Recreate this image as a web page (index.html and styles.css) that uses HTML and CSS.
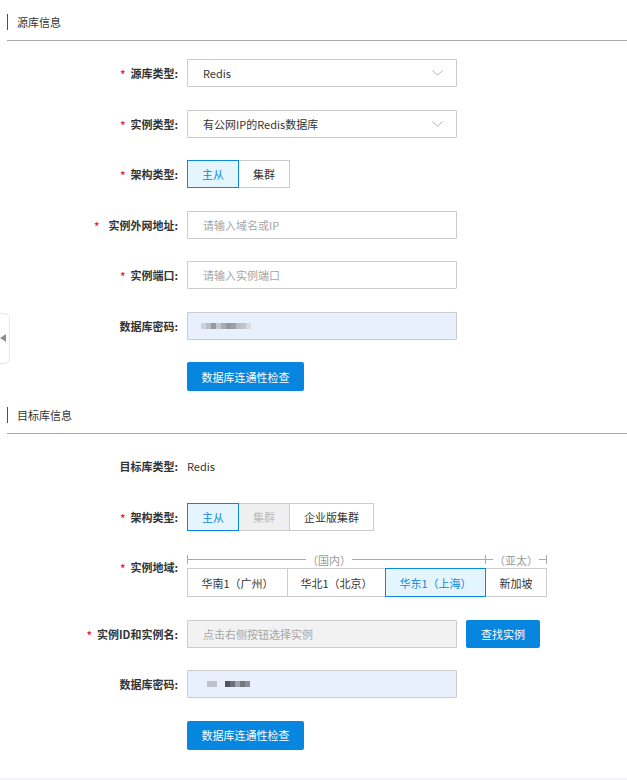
FILE: index.html
```html
<!DOCTYPE html>
<html lang="zh-CN">
<head>
<meta charset="utf-8">
<title>数据迁移</title>
<link rel="stylesheet" href="styles.css">
</head>
<body>
<div class="page">
  <div class="side-tab"><span class="tri"></span></div>

  <div class="sec-head"><div class="sec-title">源库信息</div></div>

  <div class="row first">
    <div class="label"><span class="req">*</span>源库类型:</div>
    <div class="select"><span>Redis</span><svg class="chev" width="11" height="6" viewBox="0 0 11 6"><path d="M0.5 0.5 L5.5 5.2 L10.5 0.5" fill="none" stroke="#b3b3b3" stroke-width="1"/></svg></div>
  </div>
  <div class="row">
    <div class="label"><span class="req">*</span>实例类型:</div>
    <div class="select"><span>有公网IP的Redis数据库</span><svg class="chev" width="11" height="6" viewBox="0 0 11 6"><path d="M0.5 0.5 L5.5 5.2 L10.5 0.5" fill="none" stroke="#b3b3b3" stroke-width="1"/></svg></div>
  </div>
  <div class="row">
    <div class="label"><span class="req">*</span>架构类型:</div>
    <div class="btn-group">
      <div class="seg-btn w52 active">主从</div>
      <div class="seg-btn w52">集群</div>
    </div>
  </div>
  <div class="row">
    <div class="label"><span class="req wide">*</span>实例外网地址:</div>
    <div class="input placeholder">请输入域名或IP</div>
  </div>
  <div class="row">
    <div class="label"><span class="req">*</span>实例端口:</div>
    <div class="input placeholder">请输入实例端口</div>
  </div>
  <div class="row">
    <div class="label">数据库密码:</div>
    <div class="input autofill">
      <span class="blur b1"><i class="c1"></i><i class="c2"></i><i class="c3"></i><i class="c4"></i><i class="c5"></i><i class="c3"></i><i class="c6"></i><i class="c2"></i><i class="c7"></i><i class="c8"></i></span>
    </div>
  </div>
  <div class="row">
    <div class="label"></div>
    <div class="btn-primary">数据库连通性检查</div>
  </div>

  <div class="sec-head second"><div class="sec-title">目标库信息</div></div>

  <div class="row first">
    <div class="label">目标库类型:</div>
    <div class="value">Redis</div>
  </div>
  <div class="row">
    <div class="label"><span class="req">*</span>架构类型:</div>
    <div class="btn-group">
      <div class="seg-btn w52 active">主从</div>
      <div class="seg-btn w52 disabled">集群</div>
      <div class="seg-btn w85">企业版集群</div>
    </div>
  </div>
  <div class="row">
    <div class="label"><span class="req">*</span>实例地域:</div>
    <div class="region">
      <div class="bracket">
        <div class="brk dom"><span class="ln l1"></span><span class="brk-text">（国内）</span><span class="ln grow"></span></div>
        <div class="brk apac"><span class="ln grow"></span><span class="brk-text">（亚太）</span><span class="ln grow"></span></div>
      </div>
      <div class="btn-group">
        <div class="seg-btn rg r1">华南1（广州）</div>
        <div class="seg-btn rg r2">华北1（北京）</div>
        <div class="seg-btn rg r3 active">华东1（上海）</div>
        <div class="seg-btn rg r4">新加坡</div>
      </div>
    </div>
  </div>
  <div class="row">
    <div class="label"><span class="req">*</span>实例ID和实例名:</div>
    <div class="input disabled-input placeholder">点击右侧按钮选择实例</div>
    <div class="btn-primary find">查找实例</div>
  </div>
  <div class="row">
    <div class="label">数据库密码:</div>
    <div class="input autofill">
      <span class="blur b2"><i class="c9"></i><i class="c9"></i><i class="gap"></i><i class="d1"></i><i class="d2"></i><i class="d3"></i><i class="d4"></i><i class="d5"></i></span>
    </div>
  </div>
  <div class="row">
    <div class="label"></div>
    <div class="btn-primary">数据库连通性检查</div>
  </div>

  <div class="footer-band"></div>
</div>
</body>
</html>
```
FILE: styles.css
```css
* { box-sizing: border-box; }
html, body { margin: 0; padding: 0; background: #fff; }
body {
  font-family: "Noto Sans CJK SC", "Noto Sans", sans-serif;
  font-size: 11px;
  color: #333;
}
.page { position: relative; width: 627px; height: 780px; overflow: hidden; }

.side-tab {
  position: absolute;
  left: 0;
  top: 313px;
  width: 10px;
  height: 51px;
  border: 1px solid #e6e6e6;
  border-left: none;
  border-radius: 0 6px 6px 0;
  background: #fff;
}
.side-tab .tri {
  position: absolute;
  left: 0;
  top: 20px;
  width: 0;
  height: 0;
  border-top: 4px solid transparent;
  border-bottom: 4px solid transparent;
  border-right: 6px solid #8a8f96;
}

.sec-head {
  margin-left: 7px;
  padding: 14px 0 10px;
  border-bottom: 1px solid #aaa;
}
.sec-head.second { margin-top: 2px; }
.sec-title {
  border-left: 1px solid #d9141e;
  padding-left: 9px;
  line-height: 16px;
  height: 16px;
  color: #333;
}

.row { display: flex; align-items: flex-start; margin-top: 22.5px; }
.row.first { margin-top: 18px; }
.label {
  flex: none;
  width: 187px;
  height: 28px;
  padding-right: 9px;
  text-align: right;
  line-height: 28px;
  font-weight: bold;
  color: #333;
  white-space: nowrap;
  overflow: hidden;
}
.req { color: #e8262d; font-weight: bold; margin-right: 5px; font-size: 10px; line-height: 0; }
.req.wide { margin-right: 9px; }

.select, .input {
  width: 270px;
  height: 28px;
  border: 1px solid #ccc;
  border-radius: 1px;
  display: flex;
  align-items: center;
  padding-left: 15px;
  color: #333;
}
.select { justify-content: space-between; padding-right: 13px; }
.chev { flex: none; }
.placeholder { color: #a6a6a6; }
.autofill { background: #e8f0fe; }
.disabled-input { background: #f2f2f2; }
.value { line-height: 28px; height: 28px; color: #333; }

.btn-group { display: flex; }
.seg-btn {
  height: 28px;
  border: 1px solid #ccc;
  display: flex;
  align-items: center;
  justify-content: center;
  color: #333;
  background: #fff;
  position: relative;
}
.seg-btn + .seg-btn { margin-left: -1px; }
.seg-btn.active { border-color: #0a87e3; background: #e5f5fd; color: #0a87e3; z-index: 1; }
.seg-btn.disabled { background: #efefef; color: #bbb; }
.w52 { width: 52px; }
.w85 { width: 85px; }

.region { display: flex; flex-direction: column; }
.bracket { display: flex; height: 15px; }
.brk {
  display: flex;
  align-items: center;
  height: 9px;
  margin-top: 2px;
  border-left: 1px solid #aaa;
}
.brk.dom { width: 298px; }
.brk.apac { width: 62px; border-right: 1px solid #aaa; }
.ln { height: 1px; background: #aaa; }
.ln.l1 { width: 118px; }
.ln.grow { flex: 1; }
.brk-text { color: #999; line-height: 14px; padding: 0 1px; }
.rg { height: 29px; }
.r1 { width: 101px; }
.r2 { width: 99px; }
.r3 { width: 101px; }
.r4 { width: 62px; }

.btn-primary {
  height: 29px;
  width: 117px;
  background: #0786e0;
  color: #fff;
  border-radius: 2px;
  display: flex;
  align-items: center;
  justify-content: center;
}
.btn-primary.find { width: 74px; height: 28px; margin-left: 9px; }

.blur { display: flex; height: 6px; }
.blur i { display: block; width: 5px; height: 6px; }
.b1 { margin-left: -2px; }
.b2 { margin-left: 4px; }
.c1 { background: #cdd2da; }
.c2 { background: #b9bec7; }
.c3 { background: #939aa3; }
.c4 { background: #c3c8d0; }
.c5 { background: #a7adb6; }
.c6 { background: #9ca1aa; }
.c7 { background: #c0c5cd; }
.c8 { background: #d6dae1; }
.c9 { background: #bcc2cc; }
.blur i.gap { width: 8px; background: transparent; }
.d1 { background: #50555d; }
.d2 { background: #6a6f77; }
.d3 { background: #9fa4ac; }
.d4 { background: #737880; }
.d5 { background: #8a8f97; }

.footer-band { margin-top: 28px; height: 10px; background: #f5f5f7; }
```
